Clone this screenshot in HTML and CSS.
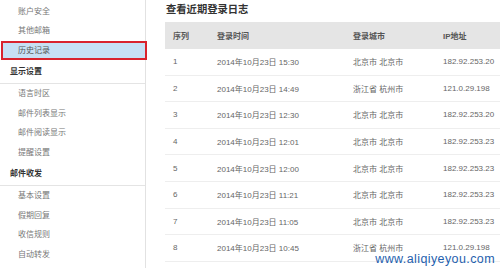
FILE: index.html
```html
<!DOCTYPE html>
<html lang="zh-CN">

<head>
  <meta charset="UTF-8">
  <meta name="viewport" content="width=device-width, initial-scale=1.0">
  <title>查看近期登录日志</title>

  <link rel="stylesheet" href="styles.css">
</head>

<body>
  <div class="page">
    <aside class="side">
      <div class="side-item">账户安全</div>
      <div class="side-item">其他邮箱</div>
      <div class="side-item active">历史记录</div>
      <div class="side-head">显示设置</div>
      <div class="side-item">语言时区</div>
      <div class="side-item">邮件列表显示</div>
      <div class="side-item">邮件阅读显示</div>
      <div class="side-item">提醒设置</div>
      <div class="side-head">邮件收发</div>
      <div class="side-item">基本设置</div>
      <div class="side-item">假期回复</div>
      <div class="side-item">收信规则</div>
      <div class="side-item">自动转发</div>
    </aside>

    <main class="main">
      <h1>查看近期登录日志</h1>
      <table class="log">
        <thead>
          <tr>
            <th class="c-no">序列</th>
            <th class="c-time">登录时间</th>
            <th class="c-city">登录城市</th>
            <th>IP地址</th>
          </tr>
        </thead>
        <tbody>
          <tr><td>1</td><td>2014年10月23日 15:30</td><td>北京市 北京市</td><td>182.92.253.20</td></tr>
          <tr><td>2</td><td>2014年10月23日 14:49</td><td>浙江省 杭州市</td><td>121.0.29.198</td></tr>
          <tr><td>3</td><td>2014年10月23日 12:30</td><td>北京市 北京市</td><td>182.92.253.20</td></tr>
          <tr><td>4</td><td>2014年10月23日 12:01</td><td>北京市 北京市</td><td>182.92.253.23</td></tr>
          <tr><td>5</td><td>2014年10月23日 12:00</td><td>北京市 北京市</td><td>182.92.253.23</td></tr>
          <tr><td>6</td><td>2014年10月23日 11:21</td><td>北京市 北京市</td><td>182.92.253.23</td></tr>
          <tr><td>7</td><td>2014年10月23日 11:05</td><td>北京市 北京市</td><td>182.92.253.23</td></tr>
          <tr><td>8</td><td>2014年10月23日 10:45</td><td>浙江省 杭州市</td><td>121.0.29.198</td></tr>
        </tbody>
      </table>
    </main>
  </div>

  <div class="watermark">www.aliqiyeyou.com</div>
</body>

</html>
```

FILE: styles.css
```css
* {
  margin: 0;
  padding: 0;
  box-sizing: border-box;
}

body {
  background: #fff;
  color: #666;
  font-family: "Liberation Sans", "Noto Sans CJK SC", sans-serif;
  font-size: 8px;
  width: 500px;
  height: 268px;
  overflow: hidden;
  position: relative;
}

.page {
  display: flex;
  height: 268px;
}

/* left menu */
.side {
  width: 146px;
  flex-shrink: 0;
  border-right: 1px solid #e2e2e2;
  padding-top: 1.5px;
}

.side-item {
  height: 19.5px;
  line-height: 19.5px;
  padding-left: 18px;
  color: #777;
}

.side-item.active {
  background: #c7e0f4;
  border: 2px solid #d9232d;
  margin-left: 1px;
  margin-right: -2px;
  padding-left: 15px;
  line-height: 15.5px;
  position: relative;
  color: #555;
}

.side-head {
  height: 24px;
  line-height: 23px;
  padding-left: 10px;
  font-weight: bold;
  color: #333;
  border-bottom: 1px solid #e4e4e4;
}

/* log table */
.main {
  flex: 1;
  padding-left: 19px;
}

h1 {
  font-size: 10.3px;
  line-height: 20px;
  height: 22px;
  color: #333;
  font-weight: bold;
  padding-left: 1px;
}

.log {
  width: 335px;
  border-collapse: collapse;
}

.log th {
  background: #e5e5e5;
  height: 26.5px;
  text-align: left;
  font-weight: bold;
  color: #555;
  padding-left: 8px;
}

.log td {
  height: 26.6px;
  padding-left: 8px;
  border-bottom: 1px solid #eeeeee;
  white-space: nowrap;
}

.c-no {
  width: 44px;
}

.c-time {
  width: 136px;
}

.c-city {
  width: 90px;
}

.watermark {
  position: absolute;
  right: 5px;
  bottom: 2px;
  font-family: "Liberation Sans", sans-serif;
  font-size: 12.5px;
  color: #1f5fae;
  letter-spacing: 0.4px;
}
```
